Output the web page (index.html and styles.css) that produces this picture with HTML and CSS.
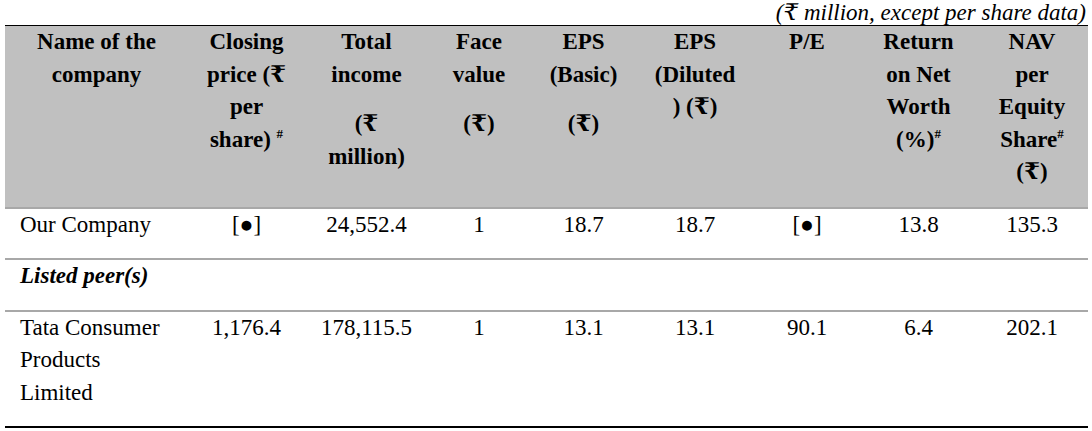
FILE: index.html
```html
<!DOCTYPE html>
<html>
<head>
<meta charset="utf-8">
<link rel="stylesheet" href="styles.css">
</head>
<body>
<div class="wrap">
  <div class="caption">(₹ million, except per share data)</div>
  <table class="peer">
    <colgroup>
      <col class="c-name"><col class="c-close"><col class="c-total"><col class="c-face"><col class="c-eps"><col class="c-dil"><col class="c-pe"><col class="c-ret"><col class="c-nav">
    </colgroup>
    <thead>
      <tr>
        <th>Name of the<br>company</th>
        <th>Closing<br>price (₹<br>per<br>share) <sup>#</sup></th>
        <th>Total<br>income<p class="para">(₹<br>million)</p></th>
        <th>Face<br>value<p class="para">(₹)</p></th>
        <th>EPS<br>(Basic)<p class="para">(₹)</p></th>
        <th>EPS<br>(Diluted<br>) (₹)</th>
        <th>P/E</th>
        <th>Return<br>on Net<br>Worth<br>(%)<sup>#</sup></th>
        <th>NAV<br>per<br>Equity<br>Share<sup>#</sup><br>(₹)</th>
      </tr>
    </thead>
    <tbody>
      <tr>
        <td class="name">Our Company</td>
        <td>[●]</td>
        <td>24,552.4</td>
        <td>1</td>
        <td>18.7</td>
        <td>18.7</td>
        <td>[●]</td>
        <td>13.8</td>
        <td>135.3</td>
      </tr>
      <tr>
        <td class="name peers">Listed peer(s)</td>
        <td></td><td></td><td></td><td></td><td></td><td></td><td></td><td></td>
      </tr>
      <tr class="last">
        <td class="name">Tata Consumer<br>Products<br>Limited</td>
        <td>1,176.4</td>
        <td>178,115.5</td>
        <td>1</td>
        <td>13.1</td>
        <td>13.1</td>
        <td>90.1</td>
        <td>6.4</td>
        <td>202.1</td>
      </tr>
    </tbody>
  </table>
</div>
</body>
</html>
```
FILE: styles.css
```css
html, body {
  margin: 0;
  padding: 0;
  background: #ffffff;
}
body {
  font-family: "Liberation Serif", "DejaVu Serif", serif;
  font-size: 23px;
  color: #000;
}
.wrap {
  margin: 0 4px 0 5px;
}
.caption {
  font-style: italic;
  text-align: right;
  line-height: 25px;
  height: 25px;
  white-space: nowrap;
  padding-right: 2px;
}
.peer {
  width: 100%;
  border-collapse: collapse;
  table-layout: fixed;
  border-top: 1px solid #000;
  border-bottom: 2px solid #000;
}
.c-name { width: 183px; }
.c-close { width: 117px; }
.c-total { width: 123px; }
.c-face { width: 102px; }
.c-eps { width: 107px; }
.c-dil { width: 116px; }
.c-pe { width: 108px; }
.c-ret { width: 115px; }
.c-nav { width: 112px; }
.peer th {
  background: #c0c0c0;
  font-weight: bold;
  text-align: center;
  vertical-align: top;
  line-height: 32.5px;
  padding: 0 2px 18px;
  border-bottom: 2px solid #a8a8a8;
}
.peer th sup {
  font-size: 13px;
  line-height: 0;
  vertical-align: 9px;
}
.para {
  margin: 17px 0 0;
}
.peer td {
  text-align: center;
  vertical-align: top;
  line-height: 32.5px;
  padding: 0 2px 17px;
  border-bottom: 2px solid #a8a8a8;
}
.peer tr.last td {
  border-bottom: none;
}
.peer td.name {
  text-align: left;
  padding-left: 15px;
}
.peer td.peers {
  font-weight: bold;
  font-style: italic;
  white-space: nowrap;
}
```
